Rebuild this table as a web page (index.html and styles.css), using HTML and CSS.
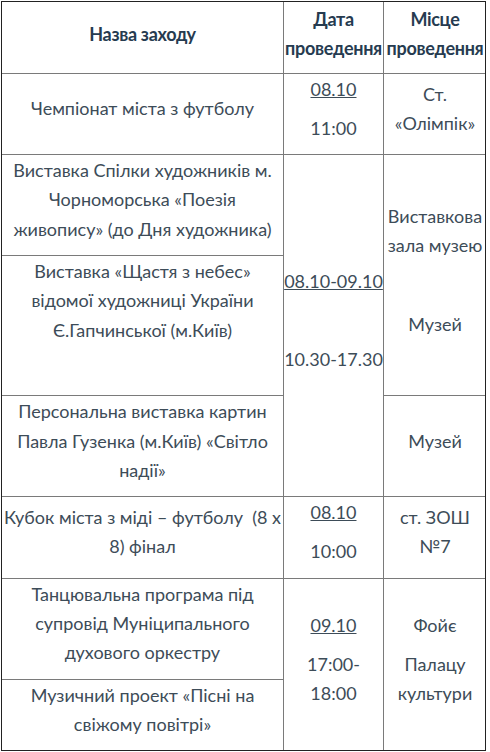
FILE: index.html
```html
<!DOCTYPE html>
<html lang="uk">
<head>
<meta charset="utf-8">
<title>Події</title>
<link rel="stylesheet" href="styles.css">
</head>
<body>
<div class="frame">
<table class="events">
  <colgroup>
    <col class="c-name">
    <col class="c-date">
    <col class="c-place">
  </colgroup>
  <thead>
    <tr>
      <th><p>Назва заходу</p></th>
      <th><p>Дата проведення</p></th>
      <th><p>Місце проведення</p></th>
    </tr>
  </thead>
  <tbody>
    <tr>
      <td><p>Чемпіонат міста з футболу</p></td>
      <td><p><u>08.10</u></p><p>11:00</p></td>
      <td><p>Ст. «Олімпік»</p></td>
    </tr>
    <tr>
      <td><p>Виставка Спілки художників м. Чорноморська «Поезія живопису» (до Дня художника)</p></td>
      <td rowspan="3"><p><u>08.10-09.10</u></p><p>&nbsp;</p><p>10.30-17.30</p></td>
      <td rowspan="2"><p>Виставкова зала музею</p><p>&nbsp;</p><p>Музей</p></td>
    </tr>
    <tr>
      <td><p>Виставка «Щастя з небес» відомої художниці України Є.Гапчинської (м.Київ)</p><p>&nbsp;</p></td>
    </tr>
    <tr>
      <td><p>Персональна виставка картин Павла Гузенка (м.Київ) «Світло надії»</p></td>
      <td><p>Музей</p></td>
    </tr>
    <tr>
      <td><p>Кубок міста з міді – футболу&nbsp; (8 х 8) фінал</p></td>
      <td><p><u>08.10</u></p><p>10:00</p></td>
      <td><p>ст. ЗОШ №7</p></td>
    </tr>
    <tr>
      <td><p>Танцювальна програма під супровід Муніципального духового оркестру</p></td>
      <td rowspan="2"><p><u>09.10</u></p><p>17:00-18:00</p></td>
      <td rowspan="2"><p>Фойє</p><p>Палацу культури</p></td>
    </tr>
    <tr>
      <td><p>Музичний проект «Пісні на свіжому повітрі»</p></td>
    </tr>
  </tbody>
</table>
</div>
</body>
</html>
```

FILE: styles.css
```css
html, body {
  margin: 0;
  padding: 0;
  background: #ffffff;
}

body {
  padding: 1px 0 0 1px;
  font-family: Lato, "Open Sans", sans-serif;
  font-size: 18px;
  color: #3d4c58;
}

.frame {
  width: 485px;
  box-sizing: border-box;
  border: 1px solid #222222;
  overflow: hidden;
}

.events {
  margin: -1px;
  width: 485px;
  table-layout: fixed;
  border-collapse: collapse;
}

.c-name { width: 282px; }
.c-date { width: 100px; }
.c-place { width: 103px; }

.events th,
.events td {
  border: 1px solid #7a7a7a;
  padding: 1px 0;
  text-align: center;
  vertical-align: middle;
  line-height: 29.3px;
}

.events th {
  letter-spacing: -0.3px;
  font-weight: 700;
  color: #263b50;
}

.events p {
  margin: 0 0 10px;
}

.events th p {
  padding-top: 2px;
  margin-bottom: 8px;
}

.events u {
  text-decoration: underline;
}
```
